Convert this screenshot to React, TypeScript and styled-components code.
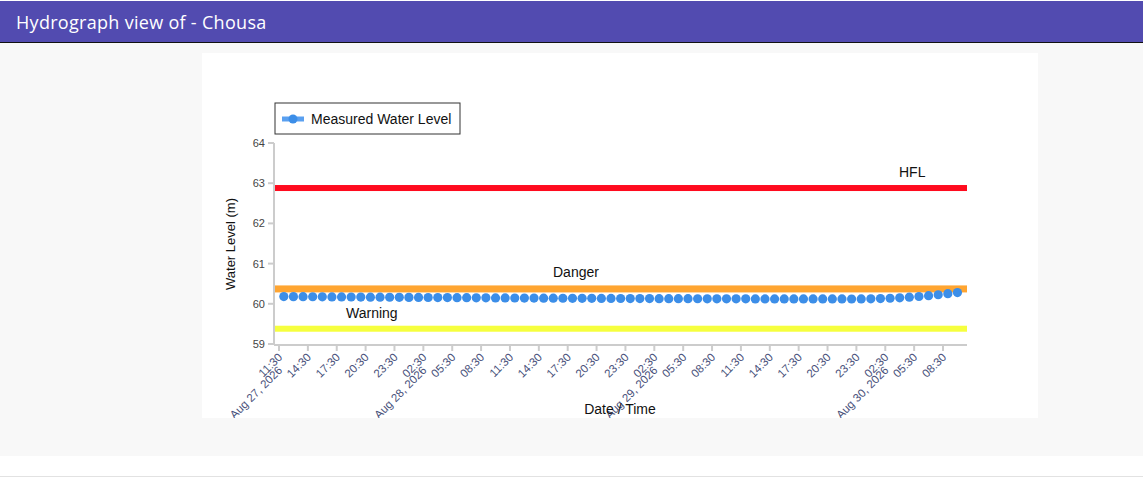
import React from "react";
import styled, { createGlobalStyle } from "styled-components";

const Global = createGlobalStyle`
  body { margin: 0; font-family: "Open Sans", "Liberation Sans", Arial, sans-serif; background: #fff; }
`;
const Page = styled.div`width: 1143px; height: 477px; display: flex; flex-direction: column; overflow: hidden; box-sizing: border-box; border-bottom: 1px solid #e2e2e2;`;
const Header = styled.div`
  height: 41px; background: #524bb0; color: #fff; border-bottom: 1px solid #111;
  display: flex; align-items: center; padding: 0 16px; font-size: 18px; font-weight: 500; letter-spacing: 0.3px;
  margin-top: 1px;
`;
const Body = styled.div`
  height: 413px; background: #f8f8f8; display: flex; justify-content: flex-start; padding: 10px 0 0 202px;
  box-sizing: border-box;
`;
const Card = styled.div`width: 836px; height: 365px; background: #fff;`;

const X0 = 77, STEP = 28.87 / 3;
const yOf = (v: number) => 90 + (64 - v) * 40.2;
const xOfH = (h: number) => X0 + h * STEP;
const times = ["11:30","14:30","17:30","20:30","23:30","02:30","05:30","08:30"];
const pts = Array.from({ length: 71 }, (_, i) => {
  const t = i / 70;
  let v = 60.18 - 0.06 * Math.sin(Math.min(t / 0.85, 1) * Math.PI / 2);
  if (t > 0.85) v = 60.12 + ((t - 0.85) / 0.15) ** 2 * 0.16;
  return { x: xOfH(0.5 + i), y: yOf(v) };
});

function Chart() {
  const ticks = Array.from({ length: 24 }, (_, i) => i);
  const dates: Record<number, string> = { 0: "Aug 27, 2026", 5: "Aug 28, 2026", 13: "Aug 29, 2026", 21: "Aug 30, 2026" };
  return (
    <svg width="836" height="365" fontFamily="'Liberation Sans', Arial, sans-serif">
      <rect x="73" y="50" width="185" height="31" fill="#fff" stroke="#333" />
      <line x1="80" y1="66" x2="102" y2="66" stroke="#5aa0f0" strokeWidth="5" />
      <circle cx="91" cy="66" r="4.5" fill="#3c8ee8" />
      <text x="109" y="71" fontSize="14" fill="#111">Measured Water Level</text>
      <line x1="72" y1="90" x2="72" y2="292" stroke="#ccc" strokeWidth="2" />
      <line x1="72" y1="292" x2="765" y2="292" stroke="#ccc" strokeWidth="2" />
      {[64,63,62,61,60,59].map(v => (
        <g key={v}>
          <line x1="66" x2="72" y1={yOf(v)} y2={yOf(v)} stroke="#ccc" strokeWidth="2" />
          <text x="63" y={yOf(v) + 4} fontSize="11" textAnchor="end" fill="#444">{v}</text>
        </g>
      ))}
      <text transform="translate(33,191) rotate(-90)" fontSize="13" textAnchor="middle" fill="#111">Water Level (m)</text>
      <rect x="73" y={yOf(62.88) - 3} width="692" height="6" fill="#ff0b1e" />
      <rect x="73" y={yOf(60.37) - 3.5} width="692" height="7" fill="#ffa531" />
      <rect x="73" y={yOf(59.38) - 3} width="692" height="6" fill="#f6ff3e" />
      <text x="697" y="124" fontSize="14" fill="#111">HFL</text>
      <text x="351" y="224" fontSize="14" fill="#111">Danger</text>
      <text x="144" y="265" fontSize="14" fill="#111">Warning</text>
      {pts.map((p, i) => <circle key={i} cx={p.x} cy={p.y} r="4.6" fill="#3c8ee8" />)}
      {ticks.map(i => {
        const x = xOfH(i * 3);
        return (
          <g key={i}>
            <line x1={x} x2={x} y1="292" y2="298" stroke="#ccc" strokeWidth="2" />
            <text transform={`translate(${x + 4},${305}) rotate(-45)`} fontSize="11.5" textAnchor="end" fill="#48507a">{times[i % 8]}</text>
            {dates[i] && <text transform={`translate(${x + 4},${318}) rotate(-45)`} fontSize="11.5" textAnchor="end" fill="#48507a">{dates[i]}</text>}
          </g>
        );
      })}
      <text x="418" y="361" fontSize="14" textAnchor="middle" fill="#111">Date / Time</text>
    </svg>
  );
}

export default function App() {
  return (
    <Page>
      <Global />
      <Header>Hydrograph view of - Chousa</Header>
      <Body><Card><Chart /></Card></Body>
    </Page>
  );
}
